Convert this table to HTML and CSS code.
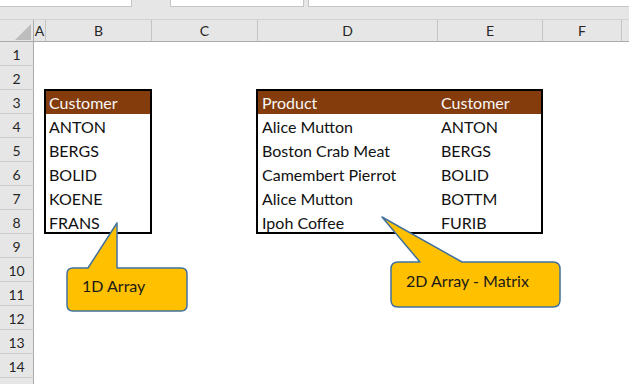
FILE: index.html
```html
<!DOCTYPE html>
<html lang="en">
<head>
    <meta charset="UTF-8">
    <title>Arrays</title>
    <link rel="stylesheet" href="styles.css">
</head>
<body>
<div class="topbar">
    <div class="field name-box"></div>
    <div class="field formula-box"></div>
    <div class="field rest-box"></div>
</div>

<div class="sheet">
    <div class="corner">
        <svg width="33" height="21" viewBox="0 0 33 21"><polygon points="15,20 31,20 31,4" fill="#bdbdbd"/></svg>
    </div>
    <div class="col-head">A</div>
    <div class="col-head">B</div>
    <div class="col-head">C</div>
    <div class="col-head">D</div>
    <div class="col-head">E</div>
    <div class="col-head">F</div>
    <div class="col-head last"></div>

    <div class="row-head">1</div>
    <div class="row-head">2</div>
    <div class="row-head">3</div>
    <div class="row-head">4</div>
    <div class="row-head">5</div>
    <div class="row-head">6</div>
    <div class="row-head">7</div>
    <div class="row-head">8</div>
    <div class="row-head">9</div>
    <div class="row-head">10</div>
    <div class="row-head">11</div>
    <div class="row-head">12</div>
    <div class="row-head">13</div>
    <div class="row-head">14</div>
    <div class="row-head"></div>

    <!-- one column: customers -->
    <div class="range range-1d">
        <div class="th">Customer</div>
        <div class="td">ANTON</div>
        <div class="td">BERGS</div>
        <div class="td">BOLID</div>
        <div class="td">KOENE</div>
        <div class="td">FRANS</div>
    </div>

    <!-- two columns: product / customer -->
    <div class="range range-2d">
        <div class="th">Product</div>
        <div class="th">Customer</div>
        <div class="td">Alice Mutton</div>
        <div class="td">ANTON</div>
        <div class="td">Boston Crab Meat</div>
        <div class="td">BERGS</div>
        <div class="td">Camembert Pierrot</div>
        <div class="td">BOLID</div>
        <div class="td">Alice Mutton</div>
        <div class="td">BOTTM</div>
        <div class="td">Ipoh Coffee</div>
        <div class="td">FURIB</div>
    </div>
</div>

<!-- floating callout shapes -->
<div class="callout callout-1d">
    <svg width="122" height="90" viewBox="0 0 122 90">
        <path d="M7 46 H22 L51 1 V46 H115 Q121 46 121 52 V83 Q121 89 115 89 H7 Q1 89 1 83 V52 Q1 46 7 46 Z"/>
    </svg>
    <span class="callout-text">1D Array</span>
</div>

<div class="callout callout-2d">
    <svg width="180" height="92" viewBox="0 0 180 92">
        <path d="M17 46 H39 L1 1 L81 46 H172 Q179 46 179 53 V84 Q179 91 172 91 H17 Q10 91 10 84 V53 Q10 46 17 46 Z"/>
    </svg>
    <span class="callout-text">2D Array - Matrix</span>
</div>
</body>
</html>
```

FILE: styles.css
```css
body, html {
    margin: 0;
    padding: 0;
    width: 629px;
    height: 384px;
    overflow: hidden;
    background-color: #ffffff;
    font-family: 'Lato', 'Liberation Sans', sans-serif;
    color: #111111;
}
body {
    position: relative;
}

/* name box / formula bar strip */
.topbar {
    display: flex;
    height: 19px;
    background-color: #e6e6e6;
    border-bottom: 1px solid #d2d2d2;
    box-sizing: content-box;
}
.field {
    height: 6px;
    background-color: #ffffff;
    border-bottom: 1px solid #c6c6c6;
}
.name-box {
    width: 131px;
    border-right: 1px solid #c6c6c6;
}
.formula-box {
    width: 132px;
    margin-left: 38px;
    border-left: 1px solid #c6c6c6;
    border-right: 1px solid #c6c6c6;
}
.rest-box {
    flex: 1;
    margin-left: 4px;
    border-left: 1px solid #c6c6c6;
}

/* worksheet grid */
.sheet {
    display: grid;
    grid-template-columns: 34px 12px 106px 106px 180px 105px 79px 1fr;
    grid-template-rows: 22px repeat(15, 24px);
}
.corner, .col-head, .row-head {
    background-color: #e6e6e6;
    box-sizing: border-box;
    color: #262626;
    font-size: 14px;
}
.corner {
    border-right: 1px solid #ababab;
    border-bottom: 1px solid #ababab;
}
.corner svg {
    display: block;
}
.col-head {
    border-right: 1px solid #c4c4c4;
    border-bottom: 1px solid #ababab;
    text-align: center;
    line-height: 21px;
}
.col-head.last {
    border-right: none;
}
.row-head {
    grid-column: 1;
    border-right: 1px solid #ababab;
    border-bottom: 1px solid #cfcfcf;
    text-align: center;
    line-height: 23px;
    padding-top: 1px;
}

/* bordered ranges */
.range {
    display: grid;
    border: 2px solid #000000;
    margin: -1px 0 0 -2px;
    background-color: #ffffff;
    font-size: 16px;
    grid-template-rows: 23px repeat(4, 24px) 22px;
    overflow: hidden;
}
.range-1d {
    grid-column: 3;
    grid-row: 4 / 10;
    grid-template-columns: 1fr;
}
.range-2d {
    grid-column: 5 / 7;
    grid-row: 4 / 10;
    grid-template-columns: 180px 1fr;
}
.th {
    background-color: #843c0c;
    color: #f7f7f7;
    line-height: 23px;
    padding-left: 3px;
    white-space: nowrap;
}
.range-2d .th:first-child,
.range-2d .td:nth-child(odd) {
    padding-left: 4px;
}
.td {
    line-height: 24px;
    padding-left: 3px;
    padding-top: 1px;
    white-space: nowrap;
}

/* callouts */
.callout {
    position: absolute;
}
.callout svg {
    display: block;
}
.callout path {
    fill: #ffc000;
    stroke: #41719c;
    stroke-width: 1.5;
    stroke-linejoin: round;
}
.callout-1d {
    left: 66px;
    top: 222px;
}
.callout-2d {
    left: 381px;
    top: 216px;
}
.callout-text {
    position: absolute;
    font-size: 16px;
    line-height: 18px;
    color: #1a1a1a;
    white-space: nowrap;
}
.callout-1d .callout-text {
    left: 16px;
    top: 55px;
}
.callout-2d .callout-text {
    left: 25px;
    top: 56px;
}
```
